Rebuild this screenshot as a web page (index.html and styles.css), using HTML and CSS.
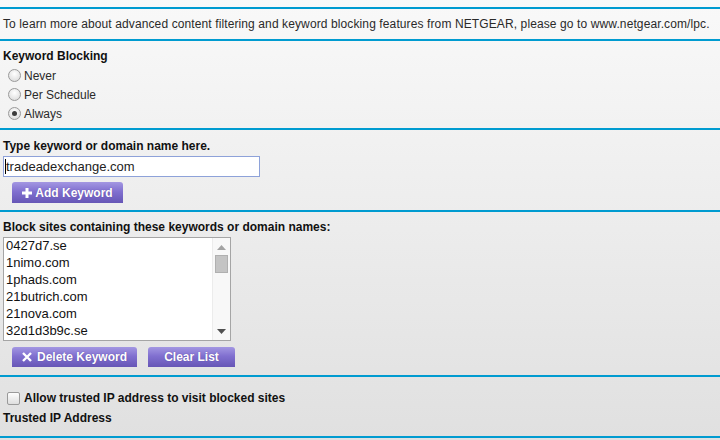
FILE: index.html
```html
<!DOCTYPE html>
<html>
<head>
<meta charset="utf-8">
<link rel="stylesheet" href="styles.css">
</head>
<body>
<div class="page">
  <div class="rule"></div>
  <div class="sec intro">To learn more about advanced content filtering and keyword blocking features from NETGEAR, please go to www.netgear.com/lpc.</div>
  <div class="rule"></div>
  <div class="sec kb">
    <div class="label">Keyword Blocking</div>
    <div class="options">
      <div class="opt"><span class="radio"></span><span>Never</span></div>
      <div class="opt"><span class="radio"></span><span>Per Schedule</span></div>
      <div class="opt"><span class="radio checked"></span><span>Always</span></div>
    </div>
  </div>
  <div class="rule"></div>
  <div class="sec type">
    <div class="label">Type keyword or domain name here.</div>
    <div class="input"><span class="caret"></span>tradeadexchange.com</div>
    <div class="btnrow indent">
      <span class="btn add"><svg class="ico" width="10" height="10" viewBox="0 0 10 10"><path d="M3.5 0h3v3.5H10v3H6.5V10h-3V6.5H0v-3h3.5z" fill="#fff"/></svg>Add Keyword</span>
    </div>
  </div>
  <div class="rule"></div>
  <div class="sec block">
    <div class="label">Block sites containing these keywords or domain names:</div>
    <div class="list">
      <div class="items">
        <div>0427d7.se</div>
        <div>1nimo.com</div>
        <div>1phads.com</div>
        <div>21butrich.com</div>
        <div>21nova.com</div>
        <div>32d1d3b9c.se</div>
      </div>
      <div class="scroll">
        <svg class="arrow" width="9" height="5" viewBox="0 0 9 5"><path d="M0 5L4.5 0L9 5z" fill="#a3a3a3"/></svg>
        <div class="thumb"></div>
        <div class="spacer"></div>
        <svg class="arrow" width="9" height="5" viewBox="0 0 9 5"><path d="M0 0L9 0L4.5 5z" fill="#505050"/></svg>
      </div>
    </div>
    <div class="btnrow indent two">
      <span class="btn del"><svg class="ico" width="10" height="10" viewBox="0 0 10 10"><path d="M1 1L9 9M9 1L1 9" stroke="#fff" stroke-width="2.4"/></svg>Delete Keyword</span>
      <span class="btn clear">Clear List</span>
    </div>
  </div>
  <div class="rule"></div>
  <div class="sec trusted">
    <div class="label chk"><span class="checkbox"></span>Allow trusted IP address to visit blocked sites</div>
    <div class="label">Trusted IP Address</div>
  </div>
  <div class="rule"></div>
</div>
</body>
</html>
```

FILE: styles.css
```css
html, body {
  margin: 0;
  padding: 0;
}
body {
  width: 720px;
  height: 440px;
  overflow: hidden;
  font-family: "Liberation Sans", Arial, sans-serif;
  font-size: 12px;
  color: #222;
  background: linear-gradient(#f9f9f9, #e0e0e0);
}
.page {
  padding-top: 7px;
}
.rule {
  height: 2px;
  background: #009bd0;
}
.sec {
  padding-left: 3px;
}
.label {
  font-weight: bold;
  line-height: 15px;
  color: #111;
}
.intro {
  height: 30px;
  line-height: 30px;
  color: #2a2a2a;
  letter-spacing: 0.11px;
  white-space: nowrap;
}
.kb {
  padding-top: 8px;
  padding-bottom: 5px;
}
.options {
  margin-top: 2px;
}
.opt {
  height: 19px;
  display: flex;
  align-items: center;
  gap: 3px;
  padding-left: 5px;
  color: #2a2a2a;
}
.radio {
  width: 11px;
  height: 11px;
  border-radius: 50%;
  border: 1px solid #9a9a9a;
  background: radial-gradient(circle at 50% 35%, #ffffff, #d6d6d6);
  position: relative;
}
.radio.checked::after {
  content: "";
  position: absolute;
  left: 3px;
  top: 3px;
  width: 5px;
  height: 5px;
  border-radius: 50%;
  background: #3c3c3c;
}
.type {
  padding-top: 9px;
  padding-bottom: 7px;
}
.input {
  margin-top: 2px;
  width: 254px;
  height: 19px;
  border: 1px solid #8ea2d9;
  background: #fff;
  font-size: 13px;
  line-height: 19px;
  color: #222;
  padding-left: 1px;
  box-sizing: content-box;
  display: flex;
  align-items: center;
}
.caret {
  width: 1px;
  height: 15px;
  background: #000;
}
.btnrow {
  display: flex;
  gap: 11px;
  margin-top: 5px;
}
.indent {
  padding-left: 9px;
}
.btn {
  height: 20px;
  box-sizing: border-box;
  display: flex;
  align-items: center;
  justify-content: center;
  gap: 3px;
  color: #fff;
  font-weight: bold;
  font-size: 12px;
  border-radius: 3px 3px 0 0;
  background: linear-gradient(#a397e2, #8170d0 45%, #6656b6);
  text-shadow: 0 0 1px rgba(60, 40, 120, 0.6);
}
.add {
  width: 111px;
  height: 21px;
}
.del {
  width: 125px;
  gap: 5px;
}
.clear {
  width: 87px;
}
.block {
  padding-top: 8px;
  padding-bottom: 8px;
}
.list {
  margin-top: 2px;
  width: 226px;
  height: 102px;
  border: 1px solid #a5a5a5;
  background: #fff;
  display: flex;
}
.items {
  flex: 1;
  padding-left: 2px;
  font-size: 13px;
  line-height: 17px;
  color: #111;
  margin-top: -1px;
}
.scroll {
  width: 17px;
  border-left: 1px solid #ececec;
  background: #f8f8f8;
  display: flex;
  flex-direction: column;
  align-items: center;
}
.arrow {
  margin-top: 7px;
  flex: none;
}
.scroll .arrow:last-child {
  margin-top: 0;
  margin-bottom: 6px;
}
.thumb {
  margin-top: 5px;
  width: 13px;
  height: 18px;
  box-sizing: border-box;
  background: #c4c4c4;
  border: 1px solid #b0b0b0;
}
.spacer {
  flex: 1;
}
.two {
  margin-top: 6px;
}
.trusted {
  padding-top: 14px;
  padding-bottom: 10px;
}
.chk {
  display: flex;
  height: 20px;
  line-height: 15px;
  align-items: flex-start;
  gap: 4px;
  padding-left: 4px;
}
.checkbox {
  width: 11px;
  height: 11px;
  border: 1px solid #9a9a9a;
  border-radius: 2px;
  background: linear-gradient(#fdfdfd, #dedede);
  margin-top: 1px;
}
```
